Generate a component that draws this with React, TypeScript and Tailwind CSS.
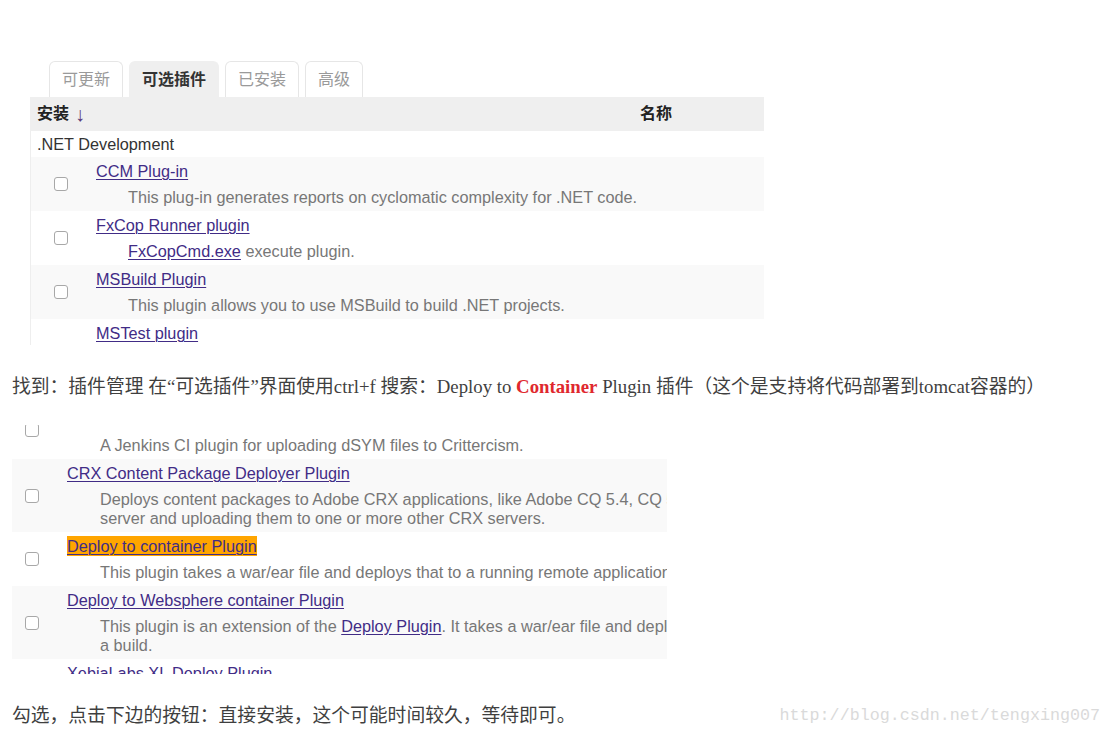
const UI_FONT = "font-['Liberation_Sans','Noto_Sans_CJK_SC',sans-serif]";
const TEXT_FONT = "font-['Liberation_Serif','Noto_Sans_CJK_SC',serif]";

type Plugin = {
  name: string;
  desc: React.ReactNode[];
  highlight?: boolean;
};

const NET_PLUGINS: Plugin[] = [
  {
    name: "CCM Plug-in",
    desc: ["This plug-in generates reports on cyclomatic complexity for .NET code."],
  },
  {
    name: "FxCop Runner plugin",
    desc: [
      <>
        <a className="text-[#412c86] underline underline-offset-2">FxCopCmd.exe</a> execute plugin.
      </>,
    ],
  },
  {
    name: "MSBuild Plugin",
    desc: ["This plugin allows you to use MSBuild to build .NET projects."],
  },
  { name: "MSTest plugin", desc: [] },
];

const DEPLOY_PLUGINS: Plugin[] = [
  {
    name: "CRX Content Package Deployer Plugin",
    desc: [
      "Deploys content packages to Adobe CRX applications, like Adobe CQ 5.4, CQ 5.5, and CQ 5.6",
      "server and uploading them to one or more other CRX servers.",
    ],
  },
  {
    name: "Deploy to container Plugin",
    highlight: true,
    desc: ["This plugin takes a war/ear file and deploys that to a running remote application server at the end of a build."],
  },
  {
    name: "Deploy to Websphere container Plugin",
    desc: [
      <>
        This plugin is an extension of the{" "}
        <a className="text-[#412c86] underline underline-offset-2">Deploy Plugin</a>. It takes a war/ear file and deploys
        that to a running remote WebSphere server at the end of
      </>,
      "a build.",
    ],
  },
  { name: "XebiaLabs XL Deploy Plugin", desc: [] },
];

function Checkbox() {
  return <span className="block h-[14px] w-[14px] rounded-[3px] border border-[#a8a8a8] bg-white" />;
}

function PluginRow({
  plugin,
  striped,
  boxLeft,
  nameLeft,
  descIndent,
}: {
  plugin: Plugin;
  striped: boolean;
  boxLeft: string;
  nameLeft: string;
  descIndent: string;
}) {
  // rows cut off at the bottom edge show no checkbox in the reference
  const cut = plugin.desc.length === 0;
  return (
    <div className={`flex items-center ${striped ? "bg-[#f9f9f9]" : "bg-white"}`}>
      <div className={`${nameLeft} shrink-0`}>
        <div className={`${boxLeft} ${cut ? "invisible" : ""}`}>
          <Checkbox />
        </div>
      </div>
      <div className="min-w-0 flex-1 pt-[4px] pb-[4px]">
        <div className="h-[20px] leading-[20px] whitespace-nowrap">
          <a
            className={`text-[#412c86] underline underline-offset-2 decoration-1 ${
              plugin.highlight ? "bg-[#ffa500] py-[1px]" : ""
            }`}
          >
            {plugin.name}
          </a>
        </div>
        {plugin.desc.length > 0 && (
          <div className={`${descIndent} mt-[7px] text-[#777]`}>
            {plugin.desc.map((line, i) => (
              <div key={i} className="h-[19px] leading-[19px] whitespace-nowrap">
                {line}
              </div>
            ))}
          </div>
        )}
      </div>
    </div>
  );
}

function Tab({ label, active }: { label: string; active?: boolean }) {
  return (
    <div
      className={`flex h-[36px] items-center rounded-t-[6px] border border-b-0 px-[12px] text-[16px] ${
        active
          ? "border-[#efefef] bg-[#efefef] font-bold text-[#333]"
          : "border-[#e6e6e6] bg-white text-[#9a9a9a]"
      }`}
    >
      {label}
    </div>
  );
}

function AvailablePluginsShot() {
  return (
    <div className={`ml-[30px] h-[284px] w-[734px] overflow-hidden text-[16.25px] ${UI_FONT}`}>
      <div className="flex items-end gap-[6px] pl-[19px]">
        <Tab label="可更新" />
        <Tab label="可选插件" active />
        <Tab label="已安装" />
        <Tab label="高级" />
      </div>
      <div className="flex h-[34px] items-center bg-[#efefef] text-[16px] font-bold text-[#222]">
        <div className="flex w-[610px] items-center gap-[6px] pl-[7px]">
          安装 <span className="text-[20px] font-normal leading-none text-[#5b3a7a]">↓</span>
        </div>
        <div>名称</div>
      </div>
      <div className="border-l border-[#eeeeee]">
        <div className="flex h-[26px] items-center pl-[6px] text-[#333]">.NET Development</div>
        {NET_PLUGINS.map((p, i) => (
          <PluginRow
            key={p.name}
            plugin={p}
            striped={i % 2 === 0}
            nameLeft="w-[65px]"
            boxLeft="pl-[23px]"
            descIndent="pl-[32px]"
          />
        ))}
      </div>
    </div>
  );
}

function DeployPluginsShot() {
  return (
    <div className={`ml-[12px] h-[249px] w-[655px] overflow-hidden text-[16.25px] ${UI_FONT}`}>
      <div className="-mt-[20px] flex items-center bg-white">
        <div className="-mt-[4px] w-[55px] shrink-0 pl-[13px]">
          <Checkbox />
        </div>
        <div className="flex-1 pt-[4px] pb-[4px]">
          <div className="h-[20px]" />
          <div className="mt-[7px] h-[19px] pl-[33px] leading-[19px] whitespace-nowrap text-[#777]">
            A Jenkins CI plugin for uploading dSYM files to Crittercism.
          </div>
        </div>
      </div>
      {DEPLOY_PLUGINS.map((p, i) => (
        <PluginRow
          key={p.name}
          plugin={p}
          striped={i % 2 === 0}
          nameLeft="w-[55px]"
          boxLeft="pl-[13px]"
          descIndent="pl-[33px]"
        />
      ))}
    </div>
  );
}

export default function App() {
  return (
    <div className="h-[735px] w-[1110px] overflow-hidden bg-white pt-[61px]">
      <AvailablePluginsShot />
      <p className={`h-[80px] pt-[30px] pl-[12px] text-[18.8px] leading-[24px] whitespace-nowrap text-[#3f3f3f] ${TEXT_FONT}`}>
        找到：插件管理 在“可选插件”界面使用ctrl+f 搜索：Deploy to{" "}
        <strong className="font-bold text-[#e0282e]">Container</strong> Plugin 插件（这个是支持将代码部署到tomcat容器的）
      </p>
      <DeployPluginsShot />
      <div className="flex items-center justify-between pt-[30px] pl-[12px] pr-[10px]">
        <p className={`text-[18.8px] leading-[24px] text-[#3f3f3f] ${TEXT_FONT}`}>
          勾选，点击下边的按钮：直接安装，这个可能时间较久，等待即可。
        </p>
        <span className="text-[16.7px] leading-[24px] text-[#dadada] font-['Liberation_Mono',monospace]">
          http://blog.csdn.net/tengxing007
        </span>
      </div>
    </div>
  );
}
